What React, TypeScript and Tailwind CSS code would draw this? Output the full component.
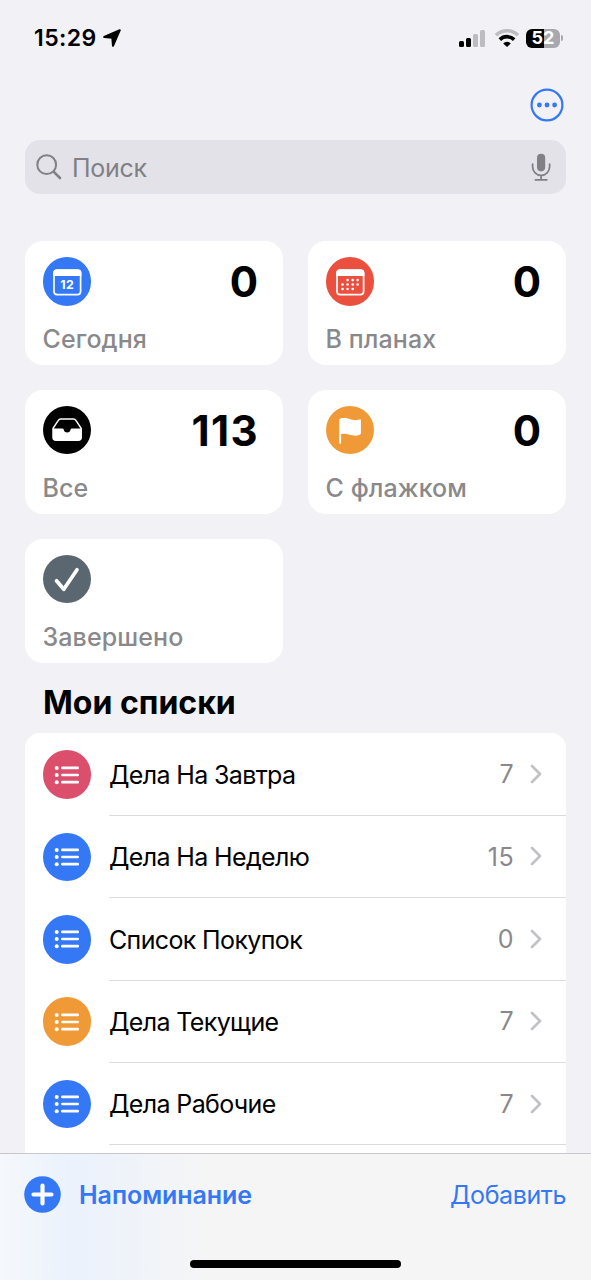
import type { ReactNode } from 'react'

const CalendarFrame = ({ children }: { children: ReactNode }) => (
  <svg viewBox="0 0 48 48" className="size-12" fill="none">
    <rect x="11" y="12.2" width="26.6" height="24.4" rx="3.2" stroke="white" strokeWidth="1.7" />
    <path d="M10.2 18V14.6a3.6 3.6 0 0 1 3.6-3.2h21a3.6 3.6 0 0 1 3.6 3.2V18z" fill="white" />
    {children}
  </svg>
)

const TodayIcon = () => (
  <CalendarFrame>
    <text
      x="24.2"
      y="31.4"
      fill="white"
      fontSize="12.4"
      fontWeight="700"
      textAnchor="middle"
      letterSpacing="0.3"
      fontFamily="Inter, sans-serif"
    >
      12
    </text>
  </CalendarFrame>
)

const dots = [
  [21.6, 22.1], [26.7, 22.1], [31.6, 22.1],
  [16.5, 26.5], [21.6, 26.5], [26.7, 26.5], [31.6, 26.5],
  [16.5, 31], [21.6, 31], [26.7, 31],
]

const PlannedIcon = () => (
  <CalendarFrame>
    {dots.map(([x, y]) => (
      <circle key={`${x}-${y}`} cx={x} cy={y} r="1.3" fill="white" />
    ))}
  </CalendarFrame>
)

const TrayIcon = () => (
  <svg viewBox="0 0 48 48" className="size-12" fill="none">
    <path
      d="M10 22.4 15.3 14.3Q16.1 12.9 17.8 12.9H30.4Q32.1 12.9 32.9 14.3L38.2 22.4V31.3A3 3 0 0 1 35.2 34.3H13A3 3 0 0 1 10 31.3Z"
      stroke="white"
      strokeWidth="1.5"
      strokeLinejoin="round"
    />
    <path
      d="M10 22.4H19.4Q20.6 22.4 20.7 23.6A3.5 3.5 0 0 0 27.6 23.6Q27.7 22.4 28.9 22.4H38.2V31.3A3 3 0 0 1 35.2 34.3H13A3 3 0 0 1 10 31.3Z"
      fill="white"
    />
  </svg>
)

const FlagIcon = () => (
  <svg viewBox="0 0 48 48" className="size-12" fill="white">
    <path d="M13.2 13.6C13.2 12.7 15.2 12 18 12C22.8 12 25 14.2 29.4 14.2C31.8 14.2 33 13.3 34.2 13.3Q34.9 13.4 34.9 14.2V27.5C34.9 28.7 32.5 29.7 29.4 29.7C24.8 29.7 22 27.8 18 27.8C16.2 27.8 15.1 28.1 15.1 28.3V36.7A.95.95 0 0 1 13.2 36.7Z" />
  </svg>
)

const CheckIcon = () => (
  <svg viewBox="0 0 48 48" className="size-12" fill="none">
    <path
      d="M13.5 25.8 20.8 34.3 34 14.8"
      stroke="white"
      strokeWidth="3.7"
      strokeLinecap="round"
      strokeLinejoin="round"
    />
  </svg>
)

const ListIcon = () => (
  <svg viewBox="0 0 48 48" className="size-12" fill="white">
    {[16.9, 24, 31.2].map((y) => (
      <g key={y}>
        <circle cx="13.7" cy={y} r="2" />
        <rect x="18" y={y - 1.35} width="18" height="2.7" rx="1.35" />
      </g>
    ))}
  </svg>
)

const SignalIcon = () => (
  <svg viewBox="0 0 27 18" width="27" height="18">
    <rect x="0" y="12" width="5" height="6" rx="1.5" fill="black" />
    <rect x="7" y="9" width="5" height="9" rx="1.5" fill="black" />
    <rect x="14" y="5" width="5" height="13" rx="1.5" fill="#bdbdc1" />
    <rect x="21" y="1" width="5" height="17" rx="1.5" fill="#bdbdc1" />
  </svg>
)

const WifiIcon = () => (
  <svg viewBox="0 0 26 18" width="26" height="18" fill="none">
    <path d="M2 6.3A15.6 15.6 0 0 1 24 6.3" stroke="#bdbdc1" strokeWidth="3.6" />
    <path d="M5.8 10.6A10.3 10.3 0 0 1 20.2 10.6" stroke="black" strokeWidth="3.6" />
    <path d="M13 18 9.2 14.4A5.4 5.4 0 0 1 16.8 14.4Z" fill="black" />
  </svg>
)

const cards = [
  { label: 'Сегодня', count: '0', color: 'bg-[#3478f6]', icon: <TodayIcon /> },
  { label: 'В планах', count: '0', color: 'bg-[#eb4f3d]', icon: <PlannedIcon /> },
  { label: 'Все', count: '113', color: 'bg-black', icon: <TrayIcon /> },
  { label: 'С флажком', count: '0', color: 'bg-[#f09a37]', icon: <FlagIcon /> },
  { label: 'Завершено', count: '', color: 'bg-[#5b6770]', icon: <CheckIcon /> },
]

const lists = [
  { name: 'Дела На Завтра', count: 7, color: 'bg-[#dc4f6c]' },
  { name: 'Дела На Неделю', count: 15, color: 'bg-[#3478f6]' },
  { name: 'Список Покупок', count: 0, color: 'bg-[#3478f6]' },
  { name: 'Дела Текущие', count: 7, color: 'bg-[#f09a37]' },
  { name: 'Дела Рабочие', count: 7, color: 'bg-[#3478f6]' },
]

export default function App() {
  return (
    <div className="flex h-[1280px] w-[591px] flex-col overflow-hidden bg-[#f1f1f6] font-[Inter,sans-serif] text-black">
      <header className="flex h-[76px] shrink-0 items-center justify-between pr-7 pl-[34px]">
        <div className="flex items-center gap-[6px]">
          <span className="text-[23px] font-semibold tracking-[0.4px]">15:29</span>
          <svg viewBox="0 0 18 18" width="18" height="18">
            <path
              d="M1.2 8 16.8 1.2 10 16.8 9.3 8.7Z"
              fill="black"
              stroke="black"
              strokeWidth="2"
              strokeLinejoin="round"
            />
          </svg>
        </div>
        <div className="flex items-center">
          <SignalIcon />
          <span className="ml-2">
            <WifiIcon />
          </span>
          <div className="ml-[6px] flex h-[19px] w-[34px] items-center justify-center rounded-[6px] bg-linear-to-r from-black from-52% to-[#a9a9ad] to-52%">
            <span className="text-[18px] leading-none font-bold text-white">52</span>
          </div>
          <div className="ml-px h-[6px] w-[2px] rounded-r-full bg-[#a9a9ad]" />
        </div>
      </header>

      <div className="flex h-16 shrink-0 justify-end pt-3 pr-[27px]">
        <button className="size-[34px]">
          <svg viewBox="0 0 34 34" fill="#3478f6">
            <circle cx="17" cy="17" r="15.4" fill="none" stroke="#3478f6" strokeWidth="2.2" />
            <circle cx="9.4" cy="17" r="2.4" />
            <circle cx="17" cy="17" r="2.4" />
            <circle cx="24.6" cy="17" r="2.4" />
          </svg>
        </button>
      </div>

      <div className="mx-[25px] flex h-[54px] shrink-0 items-center rounded-[15px] bg-[#e3e2e8] pr-[15px] pl-[11px] text-[#808085]">
        <svg viewBox="0 0 26 26" width="26" height="26" fill="none" stroke="currentColor" strokeLinecap="round">
          <circle cx="10.7" cy="10.7" r="9.4" strokeWidth="2" />
          <path d="M17.8 17.8 24 24" strokeWidth="2.6" />
        </svg>
        <span className="ml-[10px] flex-1 pt-[3px] text-[25px] tracking-[-0.3px]">Поиск</span>
        <svg viewBox="0 0 20 28" width="20" height="28" fill="none" stroke="currentColor" strokeLinecap="round">
          <rect x="6" y=".8" width="8.2" height="17.6" rx="4.1" fill="currentColor" stroke="none" />
          <path d="M1.6 11.2v2.6a8.5 8.5 0 0 0 17 0v-2.6M10.1 22.3v4.6M4.4 26.9h11.4" strokeWidth="1.8" />
        </svg>
      </div>

      <div className="mx-[25px] mt-[47.4px] grid shrink-0 grid-cols-2 gap-x-[25px] gap-y-[24.6px]">
        {cards.map((card) => (
          <div key={card.label} className="flex h-[124px] flex-col justify-between rounded-[18px] bg-white px-[17.5px] pt-4 pb-[11px]">
            <div className="flex items-center justify-between">
              <div className={`flex size-[48.5px] items-center justify-center rounded-full ${card.color}`}>{card.icon}</div>
              <span className={`pt-px text-[42px] leading-none font-bold ${card.count.length > 1 ? 'mr-[6.5px] tracking-[1.4px]' : 'mr-[7.5px]'}`}>
                {card.count}
              </span>
            </div>
            <span className="text-[25px] leading-[30px] font-medium tracking-[0.1px] text-[#89898c]">{card.label}</span>
          </div>
        ))}
      </div>

      <h2 className="mt-[20.4px] ml-[43px] shrink-0 text-[32px] leading-10 font-bold">Мои списки</h2>

      <div className="mx-[25px] mt-[10.4px] min-h-0 flex-1 overflow-hidden rounded-t-[15px] bg-white pl-[17.5px]">
        {lists.map((list) => (
          <div key={list.name} className="flex h-[82.4px] items-center gap-[18px]">
            <div className={`flex size-[48.5px] shrink-0 items-center justify-center rounded-full ${list.color}`}>
              <ListIcon />
            </div>
            <div className="flex h-full flex-1 items-center border-b border-[#dcdcdf] pr-6">
              <span className="flex-1 pt-[3px] text-[25px] tracking-[-0.64px]">{list.name}</span>
              <span className="pt-[2px] text-[25px] tracking-[0.4px] text-[#89898c]">{list.count}</span>
              <svg viewBox="0 0 12 20" width="12" height="20" className="ml-4" fill="none">
                <path d="M2 2 10 10 2 18" stroke="#c3c3c7" strokeWidth="2.8" strokeLinecap="round" strokeLinejoin="round" />
              </svg>
            </div>
          </div>
        ))}
      </div>

      <footer className="flex h-[127px] shrink-0 flex-col items-center justify-between border-t border-[#c8c8cc] bg-linear-to-r from-[#f5f8fc] via-[#ebf2fc] via-12% to-[#f5f5f6] to-35% pb-3 text-[#3478f6]">
        <div className="flex w-full items-center justify-between pt-[21px] pr-[25px] pl-6">
          <div className="flex items-center gap-[18px]">
            <svg viewBox="0 0 37 37" width="37" height="37">
              <circle cx="18.5" cy="18.5" r="18.3" fill="#3478f6" />
              <path d="M18.5 9.5v18M9.5 18.5h18" stroke="white" strokeWidth="4.2" strokeLinecap="round" />
            </svg>
            <span className="pt-[2px] text-[25px] font-semibold tracking-[-0.05px]">Напоминание</span>
          </div>
          <span className="pt-[2px] text-[25px] tracking-[-0.4px]">Добавить</span>
        </div>
        <div className="h-[8px] w-[211px] rounded-full bg-black" />
      </footer>
    </div>
  )
}
